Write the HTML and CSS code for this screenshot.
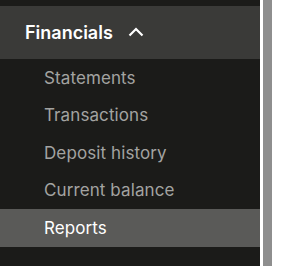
FILE: index.html
```html
<!DOCTYPE html>
<html lang="en">
<head>
  <meta charset="UTF-8">
  <title>Financials menu</title>
  <link rel="stylesheet" href="styles.css">
</head>
<body>

  <div class="page">
    <nav class="sidebar">
      <div class="nav-header open">
        <span>Financials</span>
        <svg class="chevron" width="16" height="10" viewBox="0 0 16 10">
          <path d="M1.5 8.5 L8 2 L14.5 8.5" fill="none" stroke="#fff" stroke-width="2.2"/>
        </svg>
      </div>
      <ul class="nav-list">
        <li>Statements</li>
        <li>Transactions</li>
        <li>Deposit history</li>
        <li>Current balance</li>
        <li class="active">Reports</li>
      </ul>
      <div class="nav-header">
        <span>Partner portal</span>
      </div>
    </nav>
    <div class="scrollbar"></div>
  </div>

</body>
</html>
```

FILE: styles.css
```css
* {
  box-sizing: border-box;
  font-family: Inter, "Liberation Sans", sans-serif;
}

body {
  margin: 0;
  background: #fff;
}

.page {
  display: flex;
  height: 266px;
  overflow: hidden;
}

.sidebar {
  width: 260px;
  flex-shrink: 0;
  background: #1b1b19;
  padding-top: 6px;
}

.scrollbar {
  width: 9px;
  margin-left: 3px;
  background: #8e8e8e;
}

.nav-header {
  display: flex;
  align-items: center;
  gap: 15px;
  height: 53px;
  padding-left: 25px;
  color: #fff;
  font-size: 18px;
  font-weight: 600;
}

.nav-header.open {
  background: #3a3a38;
}

.chevron {
  margin-top: -1px;
}

.nav-list {
  list-style: none;
  margin: 0;
  padding: 0;
}

.nav-list li {
  display: flex;
  align-items: center;
  height: 37.5px;
  padding-left: 44px;
  color: #a3a3a1;
  font-size: 17px;
  letter-spacing: 0.1px;
}

.nav-list li.active {
  background: #5a5a58;
  color: #fff;
}
```
